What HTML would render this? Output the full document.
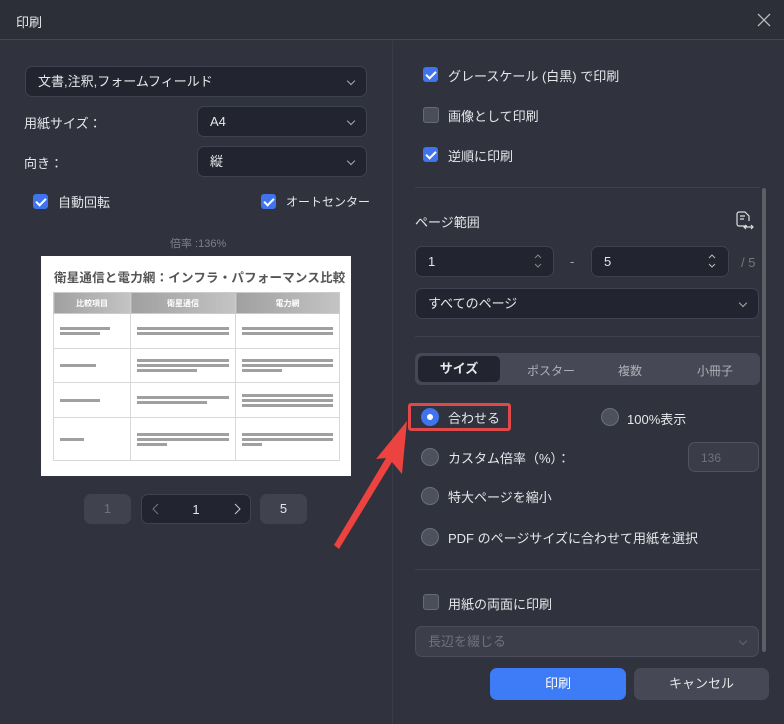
<!DOCTYPE html>
<html><head><meta charset="utf-8"><style>
*{box-sizing:border-box;margin:0;padding:0}
body{width:784px;height:724px;background:#30323d;font-family:"Liberation Sans","Noto Sans CJK JP",sans-serif;color:#e6e7ea;font-size:13px;position:relative;overflow:hidden}
.a{position:absolute}
.hdr{left:0;top:0;width:784px;height:40px;background:#2c2e38;border-bottom:1px solid #454752}
.sel{background:#22242f;border:1px solid #3f4250;border-radius:7px;height:31px;padding-left:12px;line-height:29px;font-size:13px}
.chev{position:absolute;right:12px;top:11px;width:6px;height:6px;border-right:1.3px solid #aaa;border-bottom:1.3px solid #aaa;transform:rotate(45deg)}
.cb{width:15px;height:15px;border-radius:3px;background:#3f74ee}
.cb:after{content:"";position:absolute;left:5px;top:2px;width:4px;height:8px;border-right:2px solid #fff;border-bottom:2px solid #fff;transform:rotate(45deg)}
.cbo{width:16px;height:16px;border-radius:3px;background:#4a4d5a;border:1px solid #666977}
.rd{width:18px;height:18px;border-radius:50%;background:#4d505d;border:1px solid #6b6e7b}
.div{height:1px;background:#3f414c}
.t{font-size:13px;white-space:nowrap}
table{border-collapse:collapse;width:287px;font-size:4px;color:#444}
td{border:1px solid #d8d8d8;padding:3px 6px;vertical-align:middle}
th{height:21px;color:#fff;font-size:8px;background:linear-gradient(90deg,#a0a0a0,#c4c4c4);border:1px solid #ccc}
.ln{display:block;height:3px;background:#777;margin:2px 0;opacity:.7}
.btn{height:32px;border-radius:7px;text-align:center;line-height:32px;font-size:13px}
</style></head><body>
<div class="a hdr"></div>
<div class="a t" style="left:16px;top:12px;font-size:13px">印刷</div>
<svg class="a" style="left:757px;top:13px" width="14" height="14"><path d="M1 1L13 13M13 1L1 13" stroke="#bbb" stroke-width="1.3"/></svg>
<div class="a" style="left:392px;top:41px;width:1px;height:683px;background:#3a3c47"></div>

<div class="a sel" style="left:25px;top:66px;width:342px">文書,注釈,フォームフィールド<i class="chev"></i></div>
<div class="a t" style="left:24px;top:113px">用紙サイズ：</div>
<div class="a sel" style="left:197px;top:106px;width:170px">A4<i class="chev"></i></div>
<div class="a t" style="left:24px;top:153px">向き：</div>
<div class="a sel" style="left:197px;top:146px;width:170px">縦<i class="chev"></i></div>
<div class="a cb" style="left:33px;top:194px"></div><div class="a t" style="left:58px;top:192px">自動回転</div>
<div class="a cb" style="left:261px;top:194px"></div><div class="a t" style="left:286px;top:193px;font-size:12px">オートセンター</div>
<div class="a t" style="left:170px;top:235px;font-size:11px;color:#7d808b">倍率 :136%</div>

<div class="a" style="left:41px;top:256px;width:310px;height:220px;background:#fff"></div>
<div class="a t" style="left:54px;top:267px;font-size:12.5px;font-weight:bold;color:#555;letter-spacing:0.2px">衛星通信と電力網：インフラ・パフォーマンス比較</div>
<div class="a" style="left:53px;top:292px">
<table>
<tr><th style="width:77px">比較項目</th><th style="width:105px">衛星通信</th><th>電力網</th></tr>
<tr style="height:35px"><td><span class="ln" style="width:50px"></span><span class="ln" style="width:40px"></span></td><td><span class="ln"></span><span class="ln"></span></td><td><span class="ln"></span><span class="ln"></span></td></tr>
<tr style="height:34px"><td><span class="ln" style="width:36px"></span></td><td><span class="ln"></span><span class="ln"></span><span class="ln" style="width:60px"></span></td><td><span class="ln"></span><span class="ln"></span><span class="ln" style="width:40px"></span></td></tr>
<tr style="height:35px"><td><span class="ln" style="width:40px"></span></td><td><span class="ln"></span><span class="ln" style="width:70px"></span></td><td><span class="ln"></span><span class="ln"></span><span class="ln"></span></td></tr>
<tr style="height:43px"><td><span class="ln" style="width:24px"></span></td><td><span class="ln"></span><span class="ln"></span><span class="ln" style="width:30px"></span></td><td><span class="ln"></span><span class="ln"></span><span class="ln" style="width:20px"></span></td></tr>
</table></div>

<div class="a btn" style="left:84px;top:494px;width:47px;height:30px;line-height:30px;background:#40424e;color:#6f727d">1</div>
<div class="a btn" style="left:141px;top:494px;width:110px;height:30px;line-height:30px;background:#22242f;border:1px solid #3f4250">1</div>
<svg class="a" style="left:152px;top:503px" width="90" height="12"><path d="M6 1L1 6L6 11" stroke="#777" fill="none"/><path d="M83 1L88 6L83 11" stroke="#ccc" fill="none"/></svg>
<div class="a btn" style="left:260px;top:494px;width:47px;height:30px;line-height:30px;background:#40424e">5</div>

<div class="a cb" style="left:423px;top:67px"></div><div class="a t" style="left:448px;top:66px">グレースケール (白黒) で印刷</div>
<div class="a cbo" style="left:423px;top:107px"></div><div class="a t" style="left:448px;top:106px">画像として印刷</div>
<div class="a cb" style="left:423px;top:147px"></div><div class="a t" style="left:448px;top:146px">逆順に印刷</div>
<div class="a div" style="left:415px;top:187px;width:345px"></div>
<div class="a" style="left:762px;top:188px;width:4px;height:464px;background:#5d5f67;border-radius:2px"></div>
<div class="a t" style="left:415px;top:212px">ページ範囲</div>
<svg class="a" style="left:735px;top:211px" width="20" height="20"><path d="M12 15H4a2 2 0 0 1-2-2V3a2 2 0 0 1 2-2h6l4 4v5M5 5h5M5 8h4M9 16h9M16 14l2 2-2 2M11 14l-2 2 2 2" stroke="#ddd" fill="none" stroke-width="1.2"/></svg>
<div class="a sel" style="left:415px;top:246px;width:139px">1</div>
<svg class="a" style="left:533px;top:253px" width="10" height="16"><path d="M2 5L5 2L8 5M2 11L5 14L8 11" stroke="#888" fill="none"/></svg>
<div class="a t" style="left:570px;top:254px;color:#aaa">-</div>
<div class="a sel" style="left:591px;top:246px;width:138px">5</div>
<svg class="a" style="left:707px;top:253px" width="10" height="16"><path d="M2 5L5 2L8 5M2 11L5 14L8 11" stroke="#bbb" fill="none"/></svg>
<div class="a t" style="left:741px;top:255px;color:#777">/ 5</div>
<div class="a sel" style="left:415px;top:288px;width:344px">すべてのページ<i class="chev"></i></div>
<div class="a div" style="left:415px;top:336px;width:345px"></div>
<div class="a" style="left:415px;top:353px;width:345px;height:32px;background:#464955;border-radius:6px"></div>
<div class="a btn" style="left:418px;top:356px;width:82px;height:26px;line-height:26px;background:#22242f;font-weight:bold;border-radius:5px">サイズ</div>
<div class="a t" style="left:527px;top:362px;color:#aeb0b8;font-size:12px">ポスター</div>
<div class="a t" style="left:618px;top:362px;color:#aeb0b8;font-size:12px">複数</div>
<div class="a t" style="left:697px;top:362px;color:#aeb0b8;font-size:12px">小冊子</div>

<div class="a" style="left:408px;top:403px;width:103px;height:28px;border:3px solid #e0484a;border-radius:3px"></div>
<div class="a" style="left:421px;top:408px;width:18px;height:18px;border-radius:50%;background:#3f74ee"></div>
<div class="a" style="left:427px;top:414px;width:6px;height:6px;border-radius:50%;background:#fff"></div>
<div class="a t" style="left:448px;top:408px">合わせる</div>
<div class="a rd" style="left:601px;top:408px"></div><div class="a t" style="left:627px;top:409px">100%表示</div>
<div class="a rd" style="left:421px;top:448px"></div><div class="a t" style="left:448px;top:448px">カスタム倍率（%）：</div>
<div class="a" style="left:688px;top:442px;width:71px;height:30px;border:1px solid #50535f;border-radius:7px;background:#3a3c47;color:#6f727d;padding:8px 12px;font-size:12px">136</div>
<div class="a rd" style="left:421px;top:487px"></div><div class="a t" style="left:448px;top:487px">特大ページを縮小</div>
<div class="a rd" style="left:421px;top:528px"></div><div class="a t" style="left:448px;top:528px">PDF のページサイズに合わせて用紙を選択</div>
<div class="a div" style="left:415px;top:569px;width:345px"></div>
<div class="a cbo" style="left:423px;top:594px"></div><div class="a t" style="left:448px;top:594px">用紙の両面に印刷</div>
<div class="a sel" style="left:415px;top:626px;width:344px;background:#3c3e49;border-color:#4b4e5a;color:#6f727d">長辺を綴じる<i class="chev" style="border-color:#666"></i></div>
<div class="a btn" style="left:490px;top:668px;width:136px;background:#3d7bf7;color:#fff">印刷</div>
<div class="a btn" style="left:634px;top:668px;width:135px;background:#464955">キャンセル</div>

<svg class="a" style="left:0;top:0" width="784" height="724"><path d="M334 545L339 549L392 462L402 474L407 421L376 459L386 458Z" fill="#ec4240"/></svg>
</body></html>
